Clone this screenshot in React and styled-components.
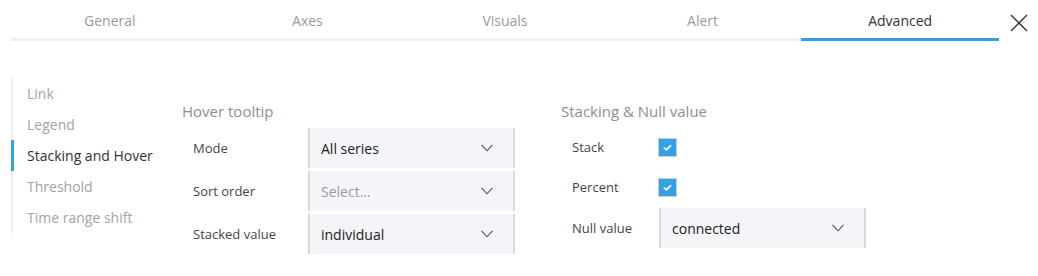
import styled, { createGlobalStyle } from 'styled-components';

const GlobalStyle = createGlobalStyle`
  body {
    margin: 0;
    background: #fff;
    font-family: 'Open Sans', 'Liberation Sans', sans-serif;
  }
`;

const Page = styled.div`
  width: 1038px;
  height: 276px;
  overflow: hidden;
`;

const Header = styled.div`
  display: flex;
  align-items: flex-start;
  padding-left: 11px;
`;

const TabBar = styled.div`
  display: flex;
  width: 988px;
  border-bottom: 3px solid #f0f0f0;
`;

const Tab = styled.div`
  flex: 1;
  height: 38px;
  line-height: 42px;
  text-align: center;
  font-size: 14px;
  color: ${(p) => (p.active ? '#333' : '#9a9a9a')};
  position: relative;
  &::after {
    content: '';
    display: ${(p) => (p.active ? 'block' : 'none')};
    position: absolute;
    left: 0;
    right: 0;
    bottom: -3px;
    height: 3px;
    background: #33a2e5;
  }
`;

const CloseButton = styled.button`
  border: none;
  background: none;
  padding: 0;
  margin: 14px 0 0 11px;
  width: 18px;
  height: 18px;
  cursor: pointer;
  svg {
    display: block;
  }
`;

const Body = styled.div`
  display: flex;
  padding: 37px 0 0 11px;
`;

const SideNav = styled.div`
  width: 169px;
  border-left: 2px solid #f0f0f0;
  align-self: flex-start;
`;

const NavItem = styled.div`
  height: 31px;
  line-height: 31px;
  padding-left: 13px;
  margin-left: -2px;
  border-left: 3px solid ${(p) => (p.active ? '#33a2e5' : 'transparent')};
  font-size: 14px;
  color: ${(p) => (p.active ? '#333' : '#a3a3a3')};
`;

const Section = styled.div`
  width: ${(p) => p.width}px;
  padding-top: 22px;
`;

const SectionTitle = styled.div`
  height: 22px;
  line-height: 22px;
  font-size: 15px;
  color: #8e8e8e;
  margin-bottom: ${(p) => p.space}px;
`;

const Row = styled.div`
  display: flex;
  align-items: center;
  height: 40px;
  margin-bottom: ${(p) => p.gap || 0}px;
`;

const Label = styled.div`
  width: ${(p) => p.width}px;
  padding-left: 11px;
  box-sizing: border-box;
  font-size: 13px;
  color: #444;
`;

const Select = styled.div`
  display: flex;
  align-items: center;
  justify-content: space-between;
  box-sizing: border-box;
  width: 207px;
  height: 40px;
  padding: 0 20px 0 11px;
  background: #f4f5f8;
  border-left: 2px solid #d8d9da;
  border-right: 2px solid #d8d9da;
  font-size: 14px;
  color: ${(p) => (p.placeholder ? '#9a9a9a' : '#222')};
`;

const Checkbox = styled.div`
  width: 19px;
  height: 19px;
  box-sizing: border-box;
  background: #33a2e5;
  border: 1px solid #c7d0d9;
  display: flex;
  align-items: center;
  justify-content: center;
`;

const Chevron = () => (
  <svg width="12" height="8" viewBox="0 0 12 8">
    <path d="M0.5 0.8 L6 6.8 L11.5 0.8" fill="none" stroke="#555" strokeWidth="1.1" />
  </svg>
);

const Check = () => (
  <svg width="9" height="7" viewBox="0 0 9 7">
    <path d="M1 3.6 L3.4 5.8 L8 1.2" fill="none" stroke="#fff" strokeWidth="1.8" />
  </svg>
);

const tabs = ['General', 'Axes', 'Visuals', 'Alert', 'Advanced'];
const navItems = ['Link', 'Legend', 'Stacking and Hover', 'Threshold', 'Time range shift'];

const App = () => {
  return (
    <Page>
      <GlobalStyle />
      <Header>
        <TabBar>
          {tabs.map((t) => (
            <Tab key={t} active={t === 'Advanced'}>
              {t}
            </Tab>
          ))}
        </TabBar>
        <CloseButton>
          <svg width="18" height="18" viewBox="0 0 18 18">
            <path d="M1 1 L17 17 M17 1 L1 17" stroke="#333" strokeWidth="1.4" />
          </svg>
        </CloseButton>
      </Header>
      <Body>
        <SideNav>
          {navItems.map((n) => (
            <NavItem key={n} active={n === 'Stacking and Hover'}>
              {n}
            </NavItem>
          ))}
        </SideNav>
        <Section width={379}>
          <SectionTitle space={6}>Hover tooltip</SectionTitle>
          <Row gap={3}>
            <Label width={126}>Mode</Label>
            <Select>
              All series
              <Chevron />
            </Select>
          </Row>
          <Row gap={3}>
            <Label width={126}>Sort order</Label>
            <Select placeholder>
              Select...
              <Chevron />
            </Select>
          </Row>
          <Row>
            <Label width={126}>Stacked value</Label>
            <Select>
              individual
              <Chevron />
            </Select>
          </Row>
        </Section>
        <Section width={320}>
          <SectionTitle space={5}>Stacking &amp; Null value</SectionTitle>
          <Row>
            <Label width={97}>Stack</Label>
            <Checkbox>
              <Check />
            </Checkbox>
          </Row>
          <Row gap={1}>
            <Label width={97}>Percent</Label>
            <Checkbox>
              <Check />
            </Checkbox>
          </Row>
          <Row>
            <Label width={98}>Null value</Label>
            <Select>
              connected
              <Chevron />
            </Select>
          </Row>
        </Section>
      </Body>
    </Page>
  );
};

export default App;
